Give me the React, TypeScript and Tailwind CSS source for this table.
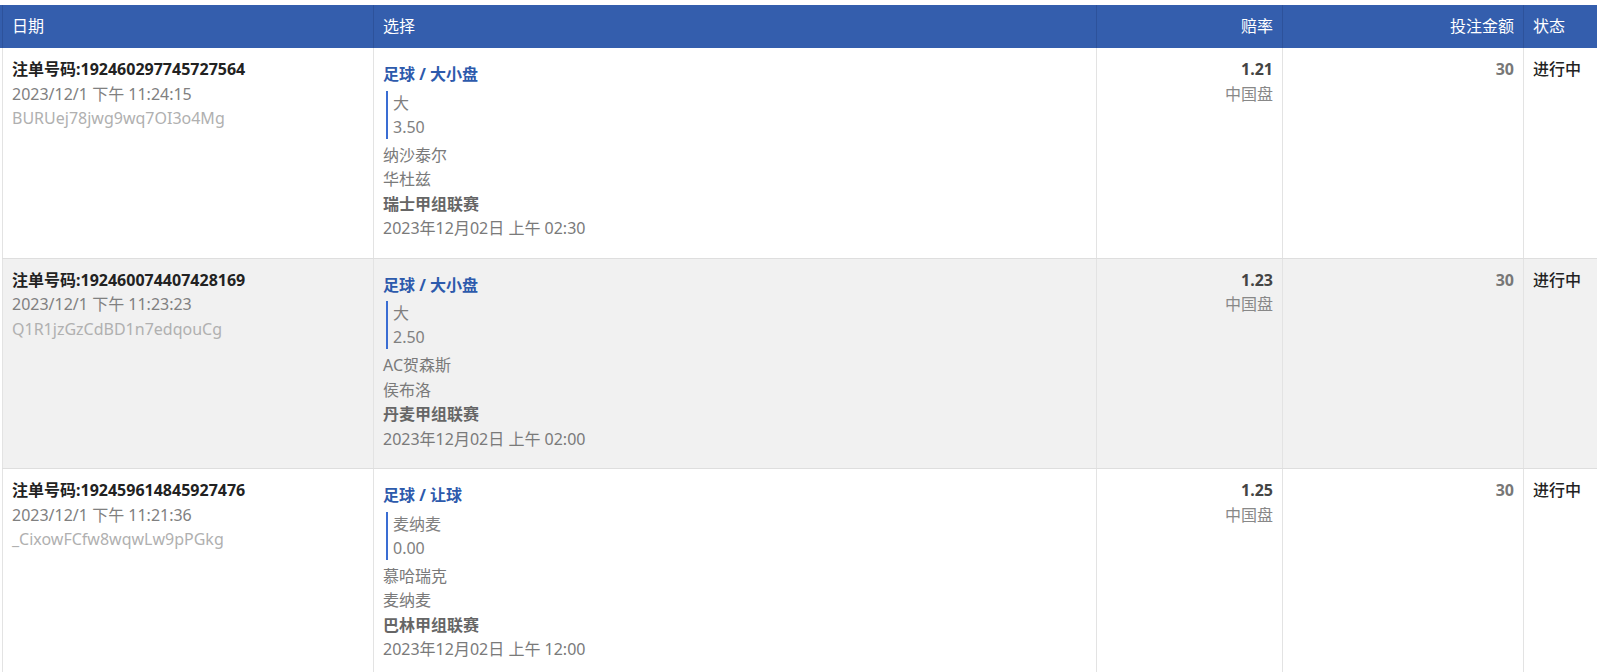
const bets = [
  {
    id: "192460297745727564",
    time: "2023/12/1 下午 11:24:15",
    code: "BURUej78jwg9wq7OI3o4Mg",
    market: "足球 / 大小盘",
    pick: "大",
    line: "3.50",
    home: "纳沙泰尔",
    away: "华杜兹",
    league: "瑞士甲组联赛",
    kickoff: "2023年12月02日 上午 02:30",
    odds: "1.21",
    oddsType: "中国盘",
    stake: "30",
    status: "进行中",
  },
  {
    id: "192460074407428169",
    time: "2023/12/1 下午 11:23:23",
    code: "Q1R1jzGzCdBD1n7edqouCg",
    market: "足球 / 大小盘",
    pick: "大",
    line: "2.50",
    home: "AC贺森斯",
    away: "侯布洛",
    league: "丹麦甲组联赛",
    kickoff: "2023年12月02日 上午 02:00",
    odds: "1.23",
    oddsType: "中国盘",
    stake: "30",
    status: "进行中",
  },
  {
    id: "192459614845927476",
    time: "2023/12/1 下午 11:21:36",
    code: "_CixowFCfw8wqwLw9pPGkg",
    market: "足球 / 让球",
    pick: "麦纳麦",
    line: "0.00",
    home: "慕哈瑞克",
    away: "麦纳麦",
    league: "巴林甲组联赛",
    kickoff: "2023年12月02日 上午 12:00",
    odds: "1.25",
    oddsType: "中国盘",
    stake: "30",
    status: "进行中",
  },
];

const cols = "grid grid-cols-[371px_723px_186px_241px_1fr]";

export default function App() {
  return (
    <div
      className="min-h-screen bg-white pt-[5px] text-[16px] leading-[24.5px]"
      style={{ fontFamily: '"Noto Sans", "Noto Sans CJK SC", sans-serif' }}
    >
      <div className={`${cols} h-[43px] bg-[#345ead] pl-[2px] text-white`}>
        <div className="flex items-center border-l border-[#2d529b] px-[9px]">日期</div>
        <div className="flex items-center border-l border-[#2d529b] px-[9px]">选择</div>
        <div className="flex items-center justify-end border-l border-[#2d529b] px-[9px]">赔率</div>
        <div className="flex items-center justify-end border-l border-[#2d529b] px-[9px]">投注金额</div>
        <div className="flex items-center border-l border-[#2d529b] px-[9px]">状态</div>
      </div>
      <div className="ml-[2px]">
        {bets.map((b, i) => (
          <div
            key={b.id}
            className={`${cols} border-b border-[#dedede] ${i % 2 === 1 ? "bg-[#f1f1f1]" : "bg-white"}`}
          >
            <div className="border-l border-[#e3e3e3] px-[9px] pt-[9px]">
              <div className="font-bold text-[#222]">注单号码:{b.id}</div>
              <div className="text-[#808080]">{b.time}</div>
              <div className="text-[#b0b0b0]">{b.code}</div>
            </div>
            <div className="border-l border-[#e3e3e3] px-[9px] pt-[14px] pb-[17px]">
              <div className="font-bold text-[#2d5aac]">{b.market}</div>
              <div className="mt-[4px] mb-[4px] ml-[3px] border-l-2 border-[#3a6dd3] pl-[5px] leading-[24px] text-[#808080]">
                <div>{b.pick}</div>
                <div>{b.line}</div>
              </div>
              <div className="text-[#7a7a7a]">{b.home}</div>
              <div className="text-[#7a7a7a]">{b.away}</div>
              <div className="font-bold text-[#666]">{b.league}</div>
              <div className="text-[#7a7a7a]">{b.kickoff}</div>
            </div>
            <div className="border-l border-[#e3e3e3] px-[9px] pt-[9px] text-right">
              <div className="font-bold text-[#444]">{b.odds}</div>
              <div className="text-[#888]">{b.oddsType}</div>
            </div>
            <div className="border-l border-[#e3e3e3] px-[9px] pt-[9px] text-right">
              <div className="font-bold text-[#777]">{b.stake}</div>
            </div>
            <div className="border-l border-[#e3e3e3] px-[9px] pt-[9px]">
              <div className="font-medium text-[#222]">{b.status}</div>
            </div>
          </div>
        ))}
      </div>
    </div>
  );
}
